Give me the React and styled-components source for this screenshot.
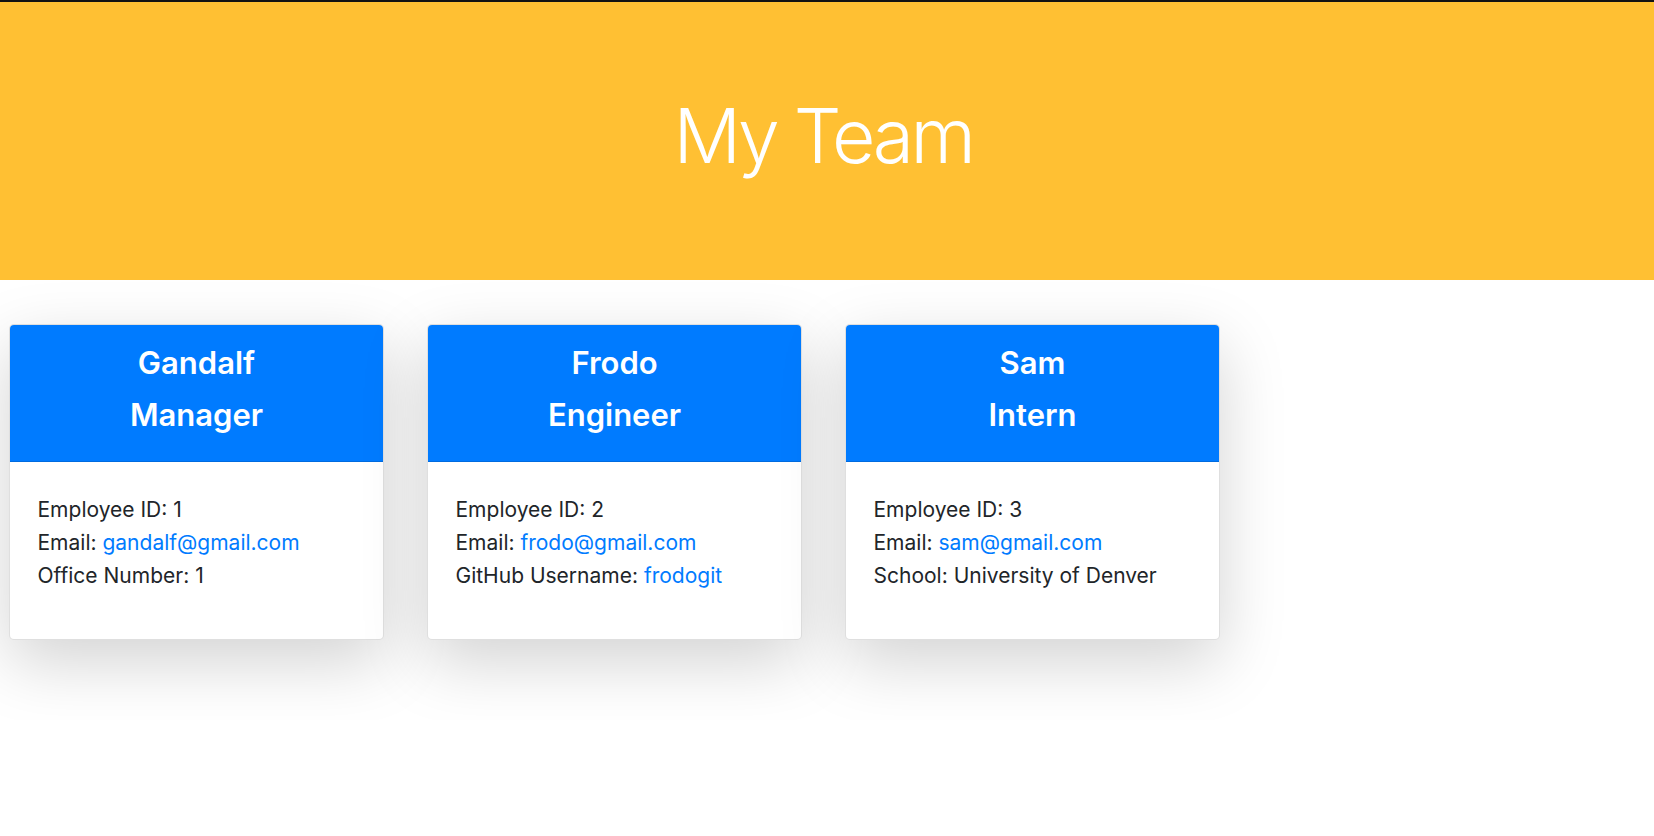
import styled, { createGlobalStyle } from "styled-components";

const GlobalStyle = createGlobalStyle`
    * {
        box-sizing: border-box;
    }
    body {
        margin: 0;
        background-color: #ffffff;
        font-family: Inter, "Noto Sans", sans-serif;
        color: #212529;
    }
`;

const team = [
    { id: 1, name: "Gandalf", role: "Manager", email: "gandalf@gmail.com", extra: { label: "Office Number", value: "1" } },
    { id: 2, name: "Frodo", role: "Engineer", email: "frodo@gmail.com", extra: { label: "GitHub Username", value: "frodogit", link: true } },
    { id: 3, name: "Sam", role: "Intern", email: "sam@gmail.com", extra: { label: "School", value: "University of Denver" } },
];

function EmployeeCard(props) {
    const { name, role, id, email, extra } = props.person;
    return (
        <Card>
            <CardHeader>
                <CardTitle>{name}</CardTitle>
                <CardTitle>{role}</CardTitle>
            </CardHeader>
            <CardBody>
                <Line>Employee ID: {id}</Line>
                <Line>Email: <Link href={`mailto:${email}`}>{email}</Link></Line>
                <Line>
                    {extra.label}: {extra.link ? <Link href="#">{extra.value}</Link> : extra.value}
                </Line>
            </CardBody>
        </Card>
    );
}

export default function App() {
    return (
        <>
            <GlobalStyle />
            <Jumbotron>
                <Title>My Team</Title>
            </Jumbotron>
            <CardRow>
                {team.map((p) => (
                    <EmployeeCard key={p.id} person={p} />
                ))}
            </CardRow>
        </>
    );
}

const Jumbotron = styled.header`
    background-color: #ffc033;
    border-top: 2px solid #121212;
    padding: 88px 44px 98px;
    margin-bottom: 44px;
    display: flex;
    justify-content: center;
`;

const Title = styled.h1`
    margin: 0;
    font-family: Inter, "Noto Sans", sans-serif;
    font-weight: 300;
    font-size: 75px;
    line-height: 92px;
    letter-spacing: -3.5px;
    color: #ffffff;
    transform: translateX(-4px);
`;

const CardRow = styled.main`
    display: flex;
    gap: 43px;
    padding: 0 9px 80px;
`;

const Card = styled.div`
    width: 375px;
    display: flex;
    flex-direction: column;
    background-color: #ffffff;
    border: 1px solid rgba(0, 0, 0, 0.125);
    border-radius: 5px;
    box-shadow: 0 22px 66px rgba(0, 0, 0, 0.175);
    overflow: hidden;
`;

const CardHeader = styled.div`
    background-color: #007bff;
    border-bottom: 1px solid rgba(0, 0, 0, 0.125);
    padding: 18px 20px 14px;
    text-align: center;
`;

const CardTitle = styled.h4`
    margin: 0 0 12px;
    font-size: 31px;
    line-height: 40px;
    font-weight: 600;
    color: #ffffff;
`;

const CardBody = styled.div`
    padding: 30.5px 27.5px 47.5px;
`;

const Line = styled.div`
    font-size: 21px;
    line-height: 33px;
    color: #212529;
`;

const Link = styled.a`
    color: #007bff;
    text-decoration: none;
`;
